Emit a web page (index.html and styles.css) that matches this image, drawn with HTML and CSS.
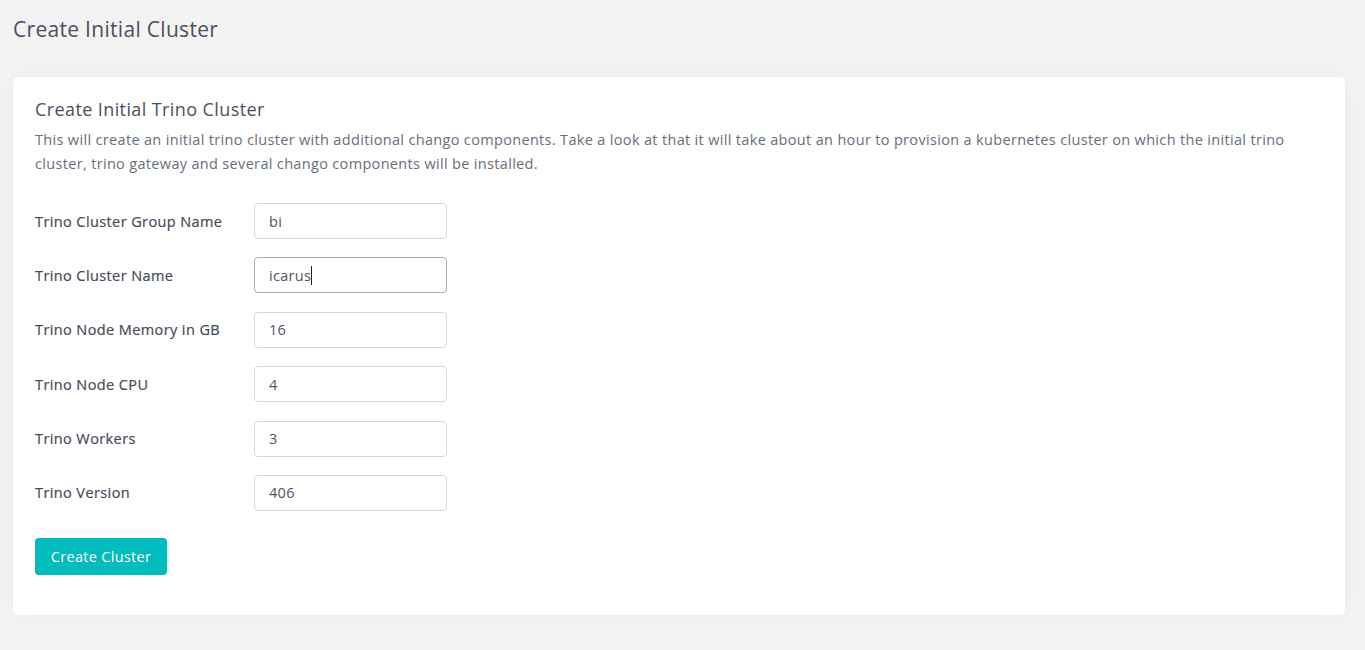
FILE: index.html
```html
<!DOCTYPE html>
<html>
<head>
<meta charset="utf-8">
<link rel="stylesheet" href="styles.css">
</head>
<body>
<div class="page">
  <h1 class="page-title">Create Initial Cluster</h1>
  <div class="card">
    <h2 class="card-title">Create Initial Trino Cluster</h2>
    <p class="card-text">This will create an initial trino cluster with additional chango components. Take a look at that it will take about an hour to provision a kubernetes cluster on which the initial trino cluster, trino gateway and several chango components will be installed.</p>
    <form class="form">
      <div class="row"><label class="label">Trino Cluster Group Name</label><input class="input" type="text" value="bi"></div>
      <div class="row"><label class="label">Trino Cluster Name</label><div class="input focus">icarus<span class="caret"></span></div></div>
      <div class="row"><label class="label">Trino Node Memory in GB</label><input class="input" type="text" value="16"></div>
      <div class="row"><label class="label">Trino Node CPU</label><input class="input" type="text" value="4"></div>
      <div class="row"><label class="label">Trino Workers</label><input class="input" type="text" value="3"></div>
      <div class="row"><label class="label">Trino Version</label><input class="input" type="text" value="406"></div>
      <button class="btn" type="button">Create Cluster</button>
    </form>
  </div>
</div>
</body>
</html>
```
FILE: styles.css
```css
* { box-sizing: border-box; }
html, body { margin: 0; padding: 0; }
body {
  background: #f4f4f4;
  font-family: "Open Sans", "Liberation Sans", sans-serif;
  color: #4f5565;
  height: 650px;
  overflow: hidden;
}
.page {
  padding: 14px 20px 0 13px;
  background: linear-gradient(#f2f2f2, #f4f4f4 60px);
}
.page-title {
  margin: 0;
  font-size: 21px;
  font-weight: 400;
  letter-spacing: 0.3px;
  line-height: 30px;
  color: #4b5060;
}
.card {
  margin-top: 33px;
  background: #fff;
  border-radius: 5px;
  box-shadow: 0 0 30px rgba(0,0,0,0.05);
  padding: 20px 22px 40px;
}
.card-title {
  margin: 0;
  font-size: 18px;
  font-weight: 400;
  letter-spacing: 0.4px;
  line-height: 24px;
  color: #4b5060;
}
.card-text {
  margin: 7px 0 0;
  font-size: 14.5px;
  letter-spacing: 0.33px;
  line-height: 24px;
  color: #6a6e7b;
}
.form {
  margin-top: 27px;
  display: flex;
  flex-direction: column;
  align-items: flex-start;
  gap: 18.4px;
}
.row {
  display: flex;
  align-items: center;
}
.label {
  width: 219px;
  font-size: 14.5px;
  font-weight: 500;
  letter-spacing: 0.4px;
  color: #454a59;
  -webkit-text-stroke: 0.2px #454a59;
}
.input {
  width: 193px;
  height: 36px;
  border: 1px solid #d4d8de;
  border-radius: 4px;
  padding: 0 14px;
  font-family: inherit;
  font-size: 14.5px;
  letter-spacing: 0.3px;
  color: #4f5565;
  background: #fff;
  display: flex;
  align-items: center;
  outline: none;
}
.focus { border-color: #a9adb3; }
.caret {
  display: inline-block;
  width: 1px;
  height: 19px;
  background: #222;
}
.btn {
  margin-top: 9px;
  width: 132px;
  height: 37px;
  border: none;
  border-radius: 4px;
  background: #01bcbc;
  color: #fff;
  font-family: inherit;
  font-size: 14.5px;
  letter-spacing: 0.3px;
  font-weight: 500;
  padding: 0;
}
```
